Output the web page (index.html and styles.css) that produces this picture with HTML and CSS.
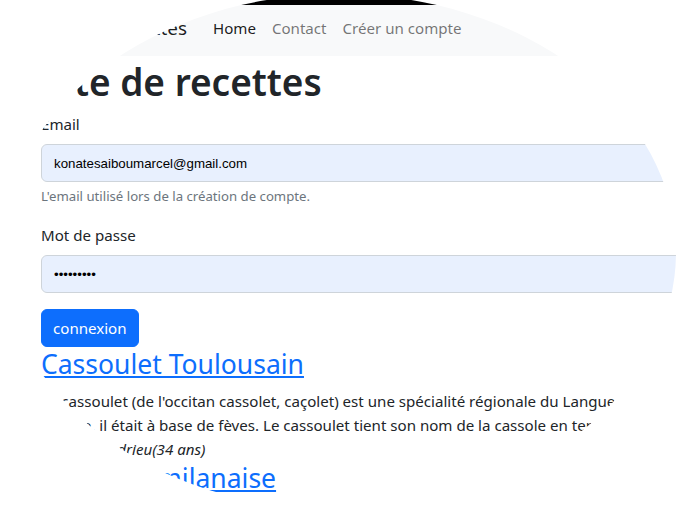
FILE: index.html
```html
<!DOCTYPE html>
<html lang="fr">
<head>
<meta charset="utf-8">
<title>Site de recettes</title>
<link rel="stylesheet" href="styles.css">
</head>
<body>
<div class="page">
  <nav class="navbar">
    <a class="brand" href="#">Site de recettes</a>
    <ul class="nav">
      <li><a class="nav-link active" href="#">Home</a></li>
      <li><a class="nav-link" href="#">Contact</a></li>
      <li><a class="nav-link" href="#">Créer un compte</a></li>
    </ul>
  </nav>
  <main class="content">
    <h1>Liste de recettes</h1>
    <form class="login">
      <div class="field">
        <label for="email">Email</label>
        <input id="email" type="email" value="konatesaiboumarcel@gmail.com">
        <div class="help">L'email utilisé lors de la création de compte.</div>
      </div>
      <div class="field">
        <label for="password">Mot de passe</label>
        <input id="password" type="password" value="cassoulet">
      </div>
      <button type="submit">connexion</button>
    </form>
    <article class="recipe">
      <h3><a href="#">Cassoulet Toulousain</a></h3>
      <div class="desc">Le cassoulet (de l'occitan cassolet, caçolet) est une spécialité régionale du Languedoc, à base de haricots secs, généralement blancs, et de viande. À son<br>origine, il était à base de fèves. Le cassoulet tient son nom de la cassole en terre cuite émaillée dite caçòla en occitan.</div>
      <i class="author">Mathieu Andrieu(34 ans)</i>
    </article>
    <article class="recipe">
      <h3><a href="#">Escalope milanaise</a></h3>
      <div class="desc">L'escalope à la milanaise est une escalope panée à la chapelure.</div>
    </article>
  </main>
</div>
</body>
</html>
```
FILE: styles.css
```css
html, body {
  margin: 0;
  height: 100%;
  overflow: hidden;
  background: #fff;
}

body {
  font-family: "Noto Sans", sans-serif;
  font-size: 15.1px;
  line-height: 24px;
  color: #212529;
}

.page {
  width: 677px;
  height: 508px;
  overflow: hidden;
  background: #fff;
  clip-path: ellipse(337px 258px at 339px 252px);
}

.navbar {
  display: flex;
  align-items: center;
  background: #f8f9fa;
  border-top: 5px solid #000;
  padding: 3px 0 8px 51px;
}

.brand {
  font-size: 18.9px;
  line-height: 30px;
  padding: 5px 0;
  margin-right: 18px;
  color: rgba(0, 0, 0, 0.9);
  text-decoration: none;
}

.nav {
  display: flex;
  list-style: none;
  margin: 0;
  padding: 0;
}

.nav-link {
  display: block;
  padding: 8px;
  color: rgba(0, 0, 0, 0.55);
  text-decoration: none;
}

.nav-link.active {
  color: rgba(0, 0, 0, 0.9);
}

.content {
  padding-left: 41px;
}

h1 {
  margin: 0 0 6px -16px;
  padding-top: 2px;
  font-size: 37px;
  font-weight: 600;
  line-height: 48px;
}

.login {
  width: 680px;
}

.field {
  margin-bottom: 16px;
}

label {
  display: block;
  margin-bottom: 8px;
}

input {
  display: block;
  box-sizing: border-box;
  width: 100%;
  height: 38px;
  padding: 6px 12px;
  border: 1px solid #ced4da;
  border-radius: 6px;
  background: #e8f0fe;
  font-family: "Liberation Sans", Arial, sans-serif;
  font-size: 13.3px;
  color: #000;
  outline: none;
}

.help {
  margin-top: 4px;
  font-size: 13.2px;
  line-height: 21px;
  color: #6c757d;
}

button {
  height: 38px;
  padding: 6px 11px;
  border: 1px solid #0d6efd;
  border-radius: 6px;
  background: #0d6efd;
  color: #fff;
  font-family: inherit;
  font-size: 15.1px;
  line-height: 24px;
}

h3 {
  margin: 0 0 7px;
  padding-top: 1px;
  font-size: 26.5px;
  font-weight: 400;
  line-height: 33.6px;
}

h3 a {
  color: #0d6efd;
}

.desc {
  white-space: nowrap;
}

.author {
  display: block;
}
```
